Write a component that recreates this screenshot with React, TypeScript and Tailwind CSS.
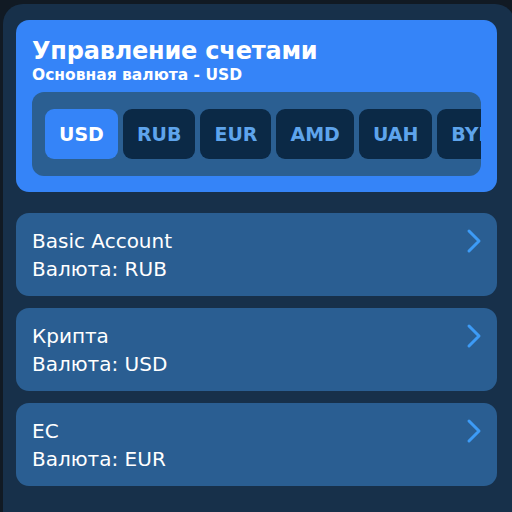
import React, { useState } from "react";

const CURRENCIES = ["USD", "RUB", "EUR", "AMD", "UAH", "BYN"];

const ACCOUNTS = [
    { name: "Basic Account", currency: "RUB" },
    { name: "Крипта", currency: "USD" },
    { name: "EC", currency: "EUR" },
];

const Chevron = () => (
    <svg width="16" height="26" viewBox="0 0 16 26" fill="none">
        <path d="M3 3 L13 13 L3 23" stroke="#3d9bf6" strokeWidth="3" strokeLinecap="round" strokeLinejoin="round" />
    </svg>
);

export default function App() {
    const [active, setActive] = useState(0);

    return (
        <div className="w-[512px] h-[512px] overflow-hidden bg-[#111a24] pl-[3px] pt-[4px]" style={{ fontFamily: "'DejaVu Sans', 'Noto Sans', sans-serif" }}>
            <div className="w-[512px] h-[520px] bg-[#17304a] rounded-t-[20px] pl-[13px] pr-[17px] pt-[16px] flex flex-col gap-[21px]">
                {/* header card */}
                <div className="w-[481px] bg-[#3584f8] rounded-[13px] px-[16px] pt-[16px] pb-[16px]">
                    <p className="text-white font-bold text-[24px] leading-[30px] tracking-[-0.2px]">Управление счетами</p>
                    <p className="text-white font-bold text-[15.5px] leading-[18px]">Основная валюта - USD</p>
                    <div className="mt-[8px] h-[84px] bg-[#2b5f92] rounded-[12px] overflow-hidden flex items-center pl-[13px] gap-[5px]">
                        {CURRENCIES.map((item, index) => (
                            <button
                                key={item}
                                onClick={() => setActive(index)}
                                className={`shrink-0 h-[50px] px-[14px] rounded-[9px] font-bold text-[19px] ${index === active ? "bg-[#3584f8] text-white" : "bg-[#0b2946] text-[#5ea4ec]"}`}
                            >
                                {item}
                            </button>
                        ))}
                    </div>
                </div>

                {/* accounts */}
                <div className="w-[481px] flex flex-col gap-[12px]">
                    {ACCOUNTS.map((acc) => (
                        <div key={acc.name} className="h-[83px] bg-[#2a5e92] rounded-[13px] pl-[16px] pr-[15px] pt-[14px] flex justify-between">
                            <div className="text-white text-[20px] leading-[28px]">
                                <p>{acc.name}</p>
                                <p>Валюта: {acc.currency}</p>
                            </div>
                            <div className="pt-[1px]">
                                <Chevron />
                            </div>
                        </div>
                    ))}
                </div>
            </div>
        </div>
    );
}
